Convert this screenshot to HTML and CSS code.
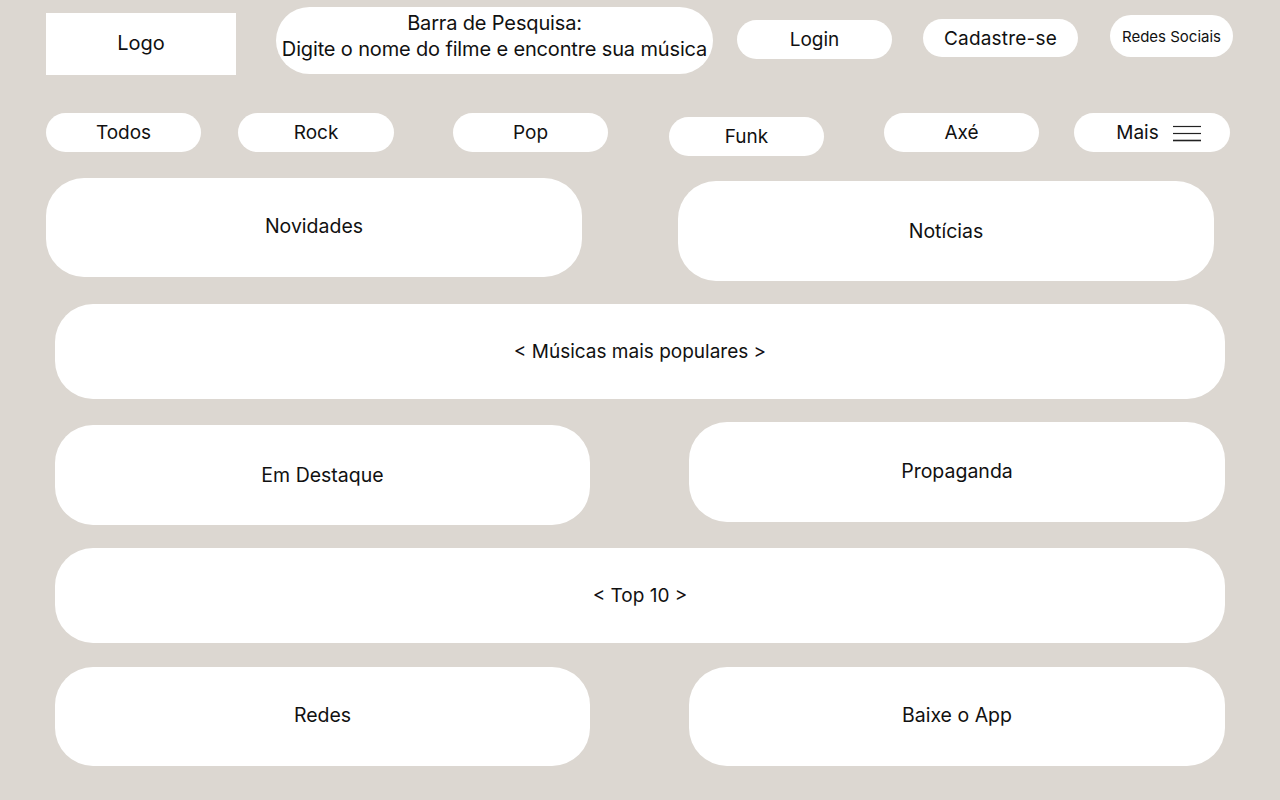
FILE: index.html
```html
<!DOCTYPE html>
<html lang="pt-BR">
<head>
<meta charset="utf-8">
<title>Wireframe</title>
<link rel="stylesheet" href="styles.css">
</head>
<body>
<div class="page">
  <header class="top">
    <div class="logo">Logo</div>
    <div class="search">Barra de Pesquisa:<br>Digite o nome do filme e encontre sua música</div>
    <div class="pill login">Login</div>
    <div class="pill signup">Cadastre-se</div>
    <div class="pill social">Redes Sociais</div>
  </header>
  <nav class="genres">
    <div class="pill g-todos">Todos</div>
    <div class="pill g-rock">Rock</div>
    <div class="pill g-pop">Pop</div>
    <div class="pill g-funk">Funk</div>
    <div class="pill g-axe">Axé</div>
    <div class="pill g-mais">Mais
      <svg class="burger" width="28" height="18" viewBox="0 0 28 18" aria-hidden="true">
        <line x1="0" y1="1.5" x2="28" y2="1.5" stroke="#222" stroke-width="1.2"/>
        <line x1="0" y1="8.5" x2="28" y2="8.5" stroke="#222" stroke-width="1.2"/>
        <line x1="0" y1="15.5" x2="28" y2="15.5" stroke="#222" stroke-width="1.6"/>
      </svg>
    </div>
  </nav>
  <section class="row row1">
    <div class="card novidades">Novidades</div>
    <div class="card noticias">Notícias</div>
  </section>
  <section class="wide musicas">&lt; Músicas mais populares &gt;</section>
  <section class="row row2">
    <div class="card destaque">Em Destaque</div>
    <div class="card propaganda">Propaganda</div>
  </section>
  <section class="wide top10">&lt; Top 10 &gt;</section>
  <section class="row row3">
    <div class="card redes">Redes</div>
    <div class="card app">Baixe o App</div>
  </section>
</div>
</body>
</html>
```
FILE: styles.css
```css
html, body {
  margin: 0;
  padding: 0;
}
body {
  background: #dcd7d1;
  font-family: "Inter", "Liberation Sans", sans-serif;
  color: #111;
  width: 1280px;
  height: 800px;
  overflow: hidden;
}
.page {
  display: flex;
  flex-direction: column;
}

/* header */
.top {
  display: flex;
  align-items: flex-start;
  padding-left: 46px;
}
.logo {
  width: 190px;
  height: 62px;
  margin-top: 13px;
  background: #fff;
  display: flex;
  align-items: center;
  justify-content: center;
  font-size: 20px;
  padding-bottom: 2px;
  box-sizing: border-box;
}
.search {
  width: 437px;
  height: 67px;
  margin-top: 7px;
  margin-left: 40px;
  background: #fff;
  border-radius: 34px;
  display: flex;
  flex-direction: column;
  align-items: center;
  justify-content: center;
  text-align: center;
  font-size: 20px;
  line-height: 26px;
  letter-spacing: -0.15px;
  padding-bottom: 9px;
  box-sizing: border-box;
}
.pill {
  background: #fff;
  border-radius: 20px;
  width: 155px;
  height: 39px;
  display: flex;
  align-items: center;
  justify-content: center;
  font-size: 19px;
  box-sizing: border-box;
}
.login { margin-top: 20px; margin-left: 24px; }
.signup { margin-top: 19px; margin-left: 31px; height: 38px; letter-spacing: 0.2px; }
.social {
  margin-top: 15px;
  margin-left: 32px;
  width: 123px;
  height: 42px;
  border-radius: 21px;
  font-size: 15px;
}

/* genres */
.genres {
  display: flex;
  align-items: flex-start;
  padding-left: 46px;
  margin-top: 38px;
}
.g-rock { margin-left: 37px; width: 156px; }
.g-pop { margin-left: 59px; }
.g-funk { margin-left: 61px; margin-top: 4px; }
.g-axe { margin-left: 60px; }
.g-mais { margin-left: 35px; width: 156px; gap: 14px; padding-left: 13px; }
.burger { display: block; margin-top: 2px; }

/* cards */
.row {
  display: flex;
  align-items: flex-start;
}
.card {
  background: #fff;
  width: 536px;
  height: 100px;
  border-radius: 38px;
  display: flex;
  align-items: center;
  justify-content: center;
  font-size: 19.5px;
}
.row1 { padding-left: 46px; margin-top: 22px; }
.novidades { height: 99px; padding-bottom: 3px; box-sizing: border-box; }
.noticias { margin-left: 96px; margin-top: 3px; }
.wide {
  background: #fff;
  width: 1170px;
  height: 95px;
  margin-left: 55px;
  border-radius: 38px;
  display: flex;
  align-items: center;
  justify-content: center;
  font-size: 19px;
}
.musicas { margin-top: 23px; }
.row2 { padding-left: 55px; margin-top: 23px; }
.destaque { width: 535px; margin-top: 3px; }
.propaganda { margin-left: 99px; padding-bottom: 3px; box-sizing: border-box; }
.top10 { margin-top: 23px; }
.row3 { padding-left: 55px; margin-top: 24px; }
.redes { width: 535px; height: 99px; padding-bottom: 3px; box-sizing: border-box; }
.app { margin-left: 99px; height: 99px; padding-bottom: 3px; box-sizing: border-box; }
```
